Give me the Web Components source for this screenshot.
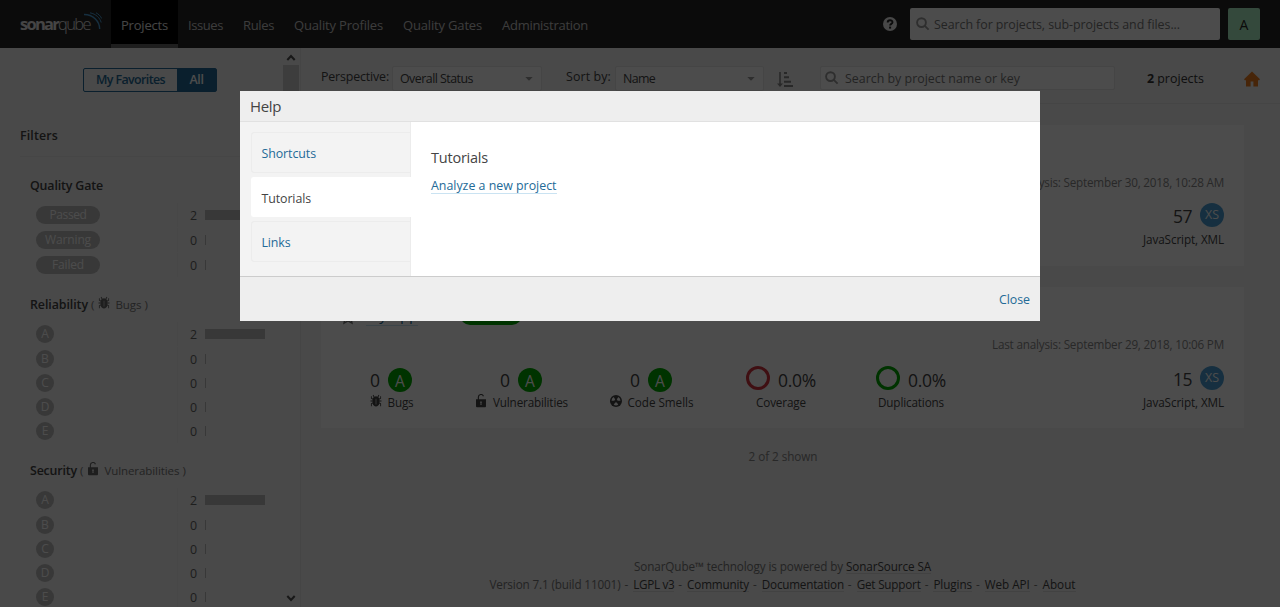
<!DOCTYPE html>
<html lang="en"><head><meta charset="utf-8"><title>Projects</title>
<style>html,body{margin:0;height:100%;overflow:hidden;background:#f3f3f3}body{font:12.4px/18px "Open Sans","Noto Sans",sans-serif;color:#444}</style></head>
<body><sq-app></sq-app>
<script>
const define=(name,css,html)=>customElements.define(name,class extends HTMLElement{
  constructor(){super();this.attachShadow({mode:'open'})}
  connectedCallback(){
    if(this.ready)return;this.ready=true;
    const get=(k,d='')=>this.getAttribute(k)??d;
    this.shadowRoot.innerHTML='<style>*{box-sizing:border-box}'+css+'</style>'+html(get,this);
  }});

/* Single line of text tracked to occupy an exact advance width. */
customElements.define('fit-text',class extends HTMLElement{
  constructor(){super();this.attachShadow({mode:'open'}).innerHTML='<style>:host{display:inline-block;white-space:pre;flex:none}span{display:inline-block}</style><span><slot></slot></span>'}
  connectedCallback(){
    const s=this.shadowRoot.querySelector('span'),w=+this.getAttribute('w');
    if(!w)return;
    const n=this.textContent.length,m=s.getBoundingClientRect().width;
    if(m)s.style.letterSpacing=((w-m)/n).toFixed(3)+'px';
    this.style.width=w+'px';
  }});

const icons={
 search:'<path fill="none" stroke="currentColor" stroke-width="1.9" d="M10.9 6.6a4.4 4.4 0 1 1-8.8 0a4.4 4.4 0 0 1 8.8 0zM9.8 9.9L13.6 13.6"/>',
 help:'<circle cx="8" cy="8" r="7" fill="currentColor"/><path d="M5.7 6.4C5.7 3.6 10.5 3.5 10.5 6.2C10.5 7.9 8.1 7.8 8.1 9.5" fill="none" stroke="#262626" stroke-width="1.9"/><path fill="#262626" d="M7.1 10.6h2v2h-2z"/>',
 bug:'<path fill="currentColor" d="M5.3 3.6L4.2 1.4l.9-.5 1.2 2.2a3.6 3.6 0 0 1 3.4 0L10.9.9l.9.5-1.1 2.2q.8.7 1 1.6l1.1-.6V2.7h1v2.5l-1.9 1v1.3h2.4v1h-2.4v1.3l1.9 1V14h-1v-2.600l-1-.5c-.4 2-1.900 3.300-3.800 3.300s-3.400-1.300-3.800-3.300l-1 .5V14h-1v-3.200l1.900-1V8.500H1.700v-1h2.400V6.200l-1.900-1V2.700h1v1.900l1.100.6q.2-.9 1-1.600z"/><path d="M7.500 5.500v6.500h1V5.500z" fill="#bbb"/>',
 lock:'<path fill="none" stroke="currentColor" stroke-width="1.300" d="M5 7V3.600a3 3 0 0 1 5.800-1.100"/><path fill="currentColor" d="M2.300 6h11.400v8q0 1-1 1h-9.400q-1 0-1-1z"/><path fill="#ddd" d="M8 8.200a1.200 1.200 0 0 1 .6 2.200l.2 2.200H7.200l.2-2.200A1.200 1.200 0 0 1 8 8.200z"/>',
 smell:'<circle cx="8" cy="8" r="6.900" fill="currentColor"/><path fill="#fff" d="M2.900 7.700A5.100 5.100 0 0 1 5.400 3.500L7.100 6.400A1.800 1.800 0 0 0 6.200 7.700zM10.600 3.500A5.100 5.100 0 0 1 13.100 7.700H9.800A1.800 1.800 0 0 0 8.900 6.400zM5.400 12.400L7.100 9.600H8.900L10.600 12.400A5.100 5.100 0 0 1 5.400 12.400z"/>',
 home:'<path fill="currentColor" d="M8 .6L0 8.300l.9 1H2V15.500h4.600V10.500h2.800v5H14V9.300h1.100l.9-1z"/>',
 sort:'<path fill="currentColor" d="M2.200 1h1.600v11.500H6L3 16 0 12.500h2.200zM7 1h3v2H7zM7 5.300h5v2H7zM7 9.700h7v2H7zM7 14h9v2H7z"/>',
 star:'<path fill="none" stroke="currentColor" stroke-width="1.400" d="M8 1.500l2 4.200 4.500.6-3.300 3.200.8 4.600L8 11.900l-4 2.200.8-4.600L1.500 6.300 6 5.700z"/>',
 up:'<path fill="none" stroke="currentColor" stroke-width="2" d="M4.300 10L8 6l3.700 4"/>',
 down:'<path fill="none" stroke="currentColor" stroke-width="2" d="M4.300 6L8 10l3.700-4"/>',
 caret:'<path fill="currentColor" d="M4.300 6h7.400L8 9.700z"/>'};
define('sq-icon',':host{display:inline-block;flex:none;line-height:0}svg{display:block}',g=>`<svg width="${g('size',16)}" height="${g('size',16)}" viewBox="0 0 16 16">${icons[g('name')]}</svg>`);

define('sq-logo',':host{display:flex;width:111px;height:48px;padding-left:20px;align-items:center;color:#e6e6e6;font-size:16.500px;line-height:24px;flex:none}b{font-weight:700}.q{font-weight:300}b,.q{margin-top:-1px}svg{margin:-5px 0 0 -8px;flex:none}',
()=>`<b><fit-text w="38">sonar</fit-text></b><span class="q"><fit-text w="32">qube</fit-text></span><svg width="20" height="19" viewBox="0 0 20 19" fill="none" stroke="#4b9fd5" stroke-width="1"><path d="M2 2.500C11 2.500 17.500 9 17.700 17" stroke-width="1.400"/><path d="M8 .8C14 2 18 6 19.200 10.500"/><path d="M14 .8C16.500 2 18.500 4 19.700 6.500"/></svg>`);

define('sq-nav',`:host{display:flex;height:48px;background:#262626;padding-right:20px;font-size:13px;flex:none}
 .i{display:flex;align-items:center;padding:1px 10px 0;color:#cacaca}.on{background:#000;color:#e6e6e6;border-bottom:4px solid #666;padding-top:5px}
 .sp{flex:1}.h{align-self:center;color:#f0f0f0;margin-right:12px}.s{align-self:center;width:310px;height:32px;background:#fff;border-radius:2px;display:flex;align-items:center;color:#777;padding:0 5px;gap:3px;font-size:12.400px}.s sq-icon{color:#999}.s fit-text{margin-top:2px}
 .a{align-self:center;margin-left:8px;width:32px;height:32px;border-radius:2px;background:#b0f5c8;display:flex;align-items:center;justify-content:center;font-size:14px;color:#262626;padding-top:1px}`,
()=>'<sq-logo></sq-logo>'+[['Projects',47,1],['Issues',35],['Rules',31],['Quality Profiles',89],['Quality Gates',79],['Administration',86]].map(([t,w,on])=>`<div class="i ${on?'on':''}"><fit-text w="${w}">${t}</fit-text></div>`).join('')+
`<div class="sp"></div><sq-icon class="h" name="help"></sq-icon><div class="s"><sq-icon name="search"></sq-icon><fit-text w="246">Search for projects, sub-projects and files...</fit-text></div><div class="a">A</div>`);

define('sq-rating',`:host{display:inline-flex;flex:none;align-items:center;justify-content:center;border-radius:20px;color:#fff}:host([kind=good]){width:24px;height:24px;background:#0a0;font-size:15.500px;padding-top:1px}:host([kind=size]){width:24px;height:24px;background:#4b9fd5;font-size:12.400px}:host([kind=off]){width:18px;height:18px;background:#bbb;font-size:12px}:host([kind=pill]){width:64px;height:18px;background:#bbb;font-size:12px}`,()=>'<slot></slot>');

define('sq-facet',`:host{display:block;margin-bottom:18px}.t{height:18px;margin:0 0 9px 30px;padding-top:2px;display:flex;align-items:center;white-space:pre}b{font-weight:600}.n{color:#777;font-size:11.500px;display:flex;align-items:center}sq-icon{margin:-4px 4px 0 3px;color:#666}
 .r{height:24px;display:flex;align-items:center;padding-left:36px}.r:nth-child(2){margin-top:1px}:host([pills]) .r+.r{margin-top:1px}.l{width:142px;height:24px;display:flex;align-items:center;border-right:1px solid #efefef}.v{width:19px;text-align:right;color:#666;padding-top:2px}.b{margin-left:8px;height:10px;background:#bbb}`,
(g,el)=>{const p=el.hasAttribute('pills');const [icon,sub,w]=g('sub')?g('sub').split('|'):[];
return `<div class="t"><b><fit-text w="${g('w')}">${g('name')}</fit-text></b>${icon?`<span class="n"> (<sq-icon name="${icon}" size="14"></sq-icon><fit-text w="${w}">${sub}</fit-text> )</span>`:''}</div><div>`+
(p?[['Passed',37],['Warning',46],['Failed',32]]:[...'ABCDE'].map(t=>[t])).map(([t,w],i)=>`<div class="r"><span class="l"><sq-rating kind="${p?'pill':'off'}">${w?`<fit-text w="${w}">${t}</fit-text>`:t}</sq-rating></span><span class="v">${i?0:2}</span><span class="b" style="width:${i?1:60}px"></span></div>`).join('')+'</div>'});

define('sq-sidebar',`:host{display:flex;width:301px;flex:none;border-right:1px solid #e6e6e6;overflow:hidden}.m{width:283px;flex:none}.f{display:flex;width:134px;height:24px;margin:20px 0 34px 83px;border:1px solid #236a97;border-radius:2px;font-weight:600;color:#236a97}
 .f span{display:flex;align-items:center;justify-content:center;width:93px}.f .on{width:39px;background:#236a97;color:#fff}.h{font-weight:600;margin-left:20px;padding-top:1px;height:30.500px;border-bottom:1px solid #e9e9e9;margin-bottom:19.500px;display:block}
 .s{width:16px;display:flex;flex-direction:column;justify-content:space-between;align-items:center}.th{width:16px;height:180px;background:#cdcdcd}.s .g{flex:1}.s sq-icon{color:#505050}.s .u{margin:2px 0 -1px}.s .d{margin-bottom:1px}`,
()=>`<div class="m"><div class="f"><span><fit-text w="69">My Favorites</fit-text></span><span class="on"><fit-text w="14">All</fit-text></span></div><div class="h"><fit-text w="38">Filters</fit-text></div>
<sq-facet pills name="Quality Gate" w="73"></sq-facet><sq-facet name="Reliability" w="58" sub="bug|Bugs|26"></sq-facet><sq-facet name="Security" w="47" sub="lock|Vulnerabilities|75"></sq-facet></div>
<div class="s"><sq-icon class="u" name="up"></sq-icon><div class="th"></div><div class="g"></div><sq-icon class="d" name="down"></sq-icon></div>`);

define('sq-select',':host{display:flex;align-items:center;width:149px;height:25px;border:1px solid #e6e6e6;border-radius:2px;background:#fff;padding:0 4px 0 7px;justify-content:space-between;flex:none}sq-icon{color:#999}',()=>'<slot></slot><sq-icon name="caret"></sq-icon>');
define('sq-toolbar',`:host{display:flex;height:56px;border-bottom:1px solid #e6e6e6;padding:18px 20px 0 20px;align-items:flex-start;flex:none}.l{margin-top:2px}.a{width:150px;margin:0 24px 0 3px}.b{margin:0 13px 0 4px}.o{margin-top:5px;color:#888}.s{margin-left:27px;width:295px;height:24px;border:1px solid #e6e6e6;border-radius:2px;background:#fff;display:flex;align-items:center;color:#777;padding:0 3px;gap:5px}.s sq-icon{margin-top:-1px;color:#999}.s fit-text{margin-top:2px}.p{margin:4px 0 0 32px;color:#333;white-space:pre;display:flex}.hm{margin:5px 0 0 auto;color:#ed7d20}`,
()=>`<span class="l"><fit-text w="68">Perspective:</fit-text></span><sq-select class="a"><fit-text w="73">Overall Status</fit-text></sq-select><span class="l"><fit-text w="45">Sort by:</fit-text></span><sq-select class="b"><fit-text w="32">Name</fit-text></sq-select><sq-icon class="o" name="sort"></sq-icon><div class="s"><sq-icon name="search"></sq-icon><fit-text w="175">Search by project name or key</fit-text></div><div class="p"><b><fit-text w="7">2</fit-text></b><fit-text w="50"> projects</fit-text></div><sq-icon class="hm" name="home"></sq-icon>`);

define('sq-measure',`:host{display:flex;flex-direction:column;align-items:center;width:130px}.v{display:flex;align-items:center;height:24px;margin-top:1px;font-size:17.500px;gap:8px}.v fit-text{margin-top:-1px}.l{display:flex;align-items:center;gap:5px;font-size:11.700px;height:20px}.l sq-icon{margin-top:-3px}`,
g=>`<div class="v"><slot name="before"></slot><fit-text w="${g('vw',10)}">${g('value')}</fit-text><slot></slot></div><div class="l">${g('icon')?`<sq-icon name="${g('icon')}" size="14"></sq-icon>`:''}<fit-text w="${g('w')}">${g('label')}</fit-text></div>`);
define('sq-ring',':host{display:block;width:24px;height:24px;border-radius:50%;border:3px solid var(--c);margin-top:-4px}',()=>'');

define('sq-card',`:host{display:flex;flex-direction:column;height:141px;background:#fff;flex:none}.t{display:flex;height:38px;padding:17px 20px 0 19px;align-items:flex-start}.t .st{color:#777;margin-top:5px}.nm{color:#236a97;font-size:15px;line-height:20px;height:22px;border-bottom:1px solid #cae3f2;margin-left:10px}.g{width:62px;height:20px;margin:1px 0 0 42px;border-radius:10px;background:#0a0}
 .d{height:18px;margin:10px 20px 14px;text-align:right;color:#888;font-size:11.700px}.r{display:flex;justify-content:space-between;padding:0 20px 0 5px}.m{display:flex}.z{display:flex;flex-direction:column;align-items:flex-end;margin:-2px 0 0 auto}:host([name]) .z{margin-top:-1px}.v{display:flex;align-items:center;gap:8px;height:24px;font-size:17.500px}.v span{padding-top:2px}.j{font-size:11.700px;height:20px;line-height:20px;margin-top:2px}`,
(g,el)=>`<div class="t">${g('name')?`<sq-icon class="st" name="star"></sq-icon><span class="nm"><fit-text w="52">${g('name')}</fit-text></span><span class="g"></span>`:''}</div><div class="d"><fit-text w="232">Last analysis: ${g('date')}</fit-text></div><div class="r"><div class="m"><slot></slot></div><div class="z"><div class="v"><span><fit-text w="19">${g('size')}</fit-text></span><sq-rating kind="size"><fit-text w="14">XS</fit-text></sq-rating></div><div class="j"><fit-text w="81">JavaScript, XML</fit-text></div></div></div>`);

define('sq-footer',`:host{display:block;font-size:11.700px;color:#777;text-align:center;line-height:18px;margin-right:16px}div{display:flex;justify-content:center;white-space:pre}a{color:#444;border-bottom:1px solid #dcdcdc;height:17px;line-height:18px}`,
()=>`<div><fit-text w="212">SonarQube™ technology is powered by </fit-text><a><fit-text w="85">SonarSource SA</fit-text></a></div><div><fit-text w="131">Version 7.1 (build 11001)</fit-text>${[['LGPL v3',41],['Community',62],['Documentation',82],['Get Support',64],['Plugins',38.5],['Web API',45],['About',33]].map(([t,w])=>`<fit-text w="12.8"> - </fit-text><a><fit-text w="${w}">${t}</fit-text></a>`).join('')}</div>`);

define('sq-main',`:host{display:flex;flex-direction:column;flex:1;min-width:0}.c{padding:21px 36px 0 20px;display:flex;flex-direction:column;gap:21px}.n{text-align:center;color:#888;font-size:11.700px;margin:19px 15px 0 0;height:18px}sq-footer{margin-top:92px}`,
()=>`<sq-toolbar></sq-toolbar><div class="c"><sq-card date="September 30, 2018, 10:28 AM" size="57"></sq-card><sq-card name="My App" date="September 29, 2018, 10:06 PM" size="15">
<sq-measure value="0" label="Bugs" w="26" icon="bug"><sq-rating kind="good">A</sq-rating></sq-measure><sq-measure value="0" label="Vulnerabilities" w="75" icon="lock"><sq-rating kind="good">A</sq-rating></sq-measure><sq-measure value="0" label="Code Smells" w="66" icon="smell"><sq-rating kind="good">A</sq-rating></sq-measure><sq-measure value="0.0%" vw="38" label="Coverage" w="50"><sq-ring slot="before" style="--c:#d4333f"></sq-ring></sq-measure><sq-measure value="0.0%" vw="38" label="Duplications" w="66"><sq-ring slot="before" style="--c:#0a0"></sq-ring></sq-measure></sq-card></div>
<div class="n"><fit-text w="69">2 of 2 shown</fit-text></div><sq-footer></sq-footer>`);

define('sq-help',`:host{position:fixed;inset:0;background:rgba(0,0,0,.7);display:flex;justify-content:center;align-items:flex-start}.d{width:800px;height:230px;margin-top:91px;background:#fff;display:flex;flex-direction:column}
 header{height:31px;background:#eee;border-bottom:1px solid #e1e1e1;padding:6px 10px;font-size:15px}.b{display:flex;height:154px}nav{width:171px;background:#f3f3f3;padding:10px 0 0 11px;border-right:1px solid #ececec}nav div{width:160px;height:41px;margin-bottom:4px;border:1px solid #ececec;border-right:0;border-radius:3px 0 0 3px;padding:12px 9.500px;color:#236a97}nav .on{background:#fff;border-color:#fff;color:#444;height:40px}section{padding:26px 20px}h3{font-size:14.500px;line-height:20px;font-weight:400;margin:0 0 8px}a{color:#236a97;display:inline-block;height:18px;border-bottom:1px solid #cae3f2;line-height:20px}
 footer{height:45px;background:#eee;border-top:1px solid #ccc;display:flex;justify-content:flex-end;align-items:center;padding:1px 10px 0;color:#236a97}`,
()=>`<div class="d"><header><fit-text w="31">Help</fit-text></header><div class="b"><nav><div><fit-text w="54.500">Shortcuts</fit-text></div><div class="on"><fit-text w="49.500">Tutorials</fit-text></div><div><fit-text w="29">Links</fit-text></div></nav><section><h3><fit-text w="57">Tutorials</fit-text></h3><a><fit-text w="125.500">Analyze a new project</fit-text></a></section></div><footer><fit-text w="31">Close</fit-text></footer></div>`);

define('sq-app',':host{display:flex;flex-direction:column;width:1280px;height:607px;overflow:hidden}.p{display:flex;height:559px}',()=>'<sq-nav></sq-nav><div class="p"><sq-sidebar></sq-sidebar><sq-main></sq-main></div><sq-help></sq-help>');
</script></body></html>
